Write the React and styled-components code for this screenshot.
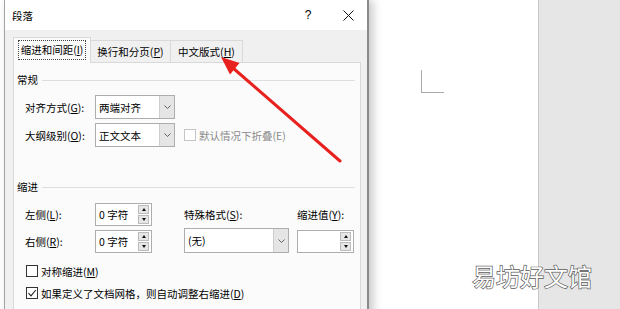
import React from 'react';
import styled, { createGlobalStyle } from 'styled-components';

const GlobalStyle = createGlobalStyle`
  html, body {
    margin: 0;
    padding: 0;
    background: #fff;
  }
`;

const Screen = styled.div`
  position: relative;
  width: 620px;
  height: 309px;
  overflow: hidden;
  display: flex;
  background: #fff;
  font-family: "Noto Sans CJK SC", "Noto Sans", sans-serif;
  font-size: 10.5px;
  color: #000;
`;

const DialogSlot = styled.div`
  flex: none;
  padding-left: 4px;
  position: relative;
  z-index: 1;
`;

const Dialog = styled.div`
  width: 365px;
  height: 340px;
  box-sizing: border-box;
  border-left: 1px solid #a3a3a3;
  border-right: 2px solid #8a8a8a;
  background: #f0f0f0;
  box-shadow: 4px 0 9px rgba(0, 0, 0, 0.22);
  display: flex;
  flex-direction: column;
`;

const TitleBar = styled.div`
  height: 30px;
  flex: none;
  background: #fff;
  display: flex;
  align-items: center;
  padding-left: 7px;
  padding-right: 5px;
`;

const Title = styled.span`
  flex: 1;
`;

const TitleButton = styled.div`
  width: 28px;
  height: 30px;
  margin-left: ${p => p.$gap || 0}px;
  display: flex;
  align-items: center;
  justify-content: center;
  font-family: "Liberation Sans", sans-serif;
  font-size: 12px;
`;

const Body = styled.div`
  flex: 1;
  display: flex;
  flex-direction: column;
  padding: 7px 6px 0 8px;
`;

const TabStrip = styled.div`
  height: 25px;
  display: flex;
  align-items: flex-end;
  position: relative;
  z-index: 1;
`;

const Tab = styled.div`
  width: ${p => p.$w}px;
  height: ${p => (p.$active ? 26 : 22)}px;
  margin-bottom: ${p => (p.$active ? -1 : 0)}px;
  margin-left: ${p => (p.$first ? 0 : -1)}px;
  box-sizing: border-box;
  border: 1px solid #d9d9d9;
  border-bottom: none;
  background: ${p => (p.$active ? '#fbfbfb' : '#f0f0f0')};
  display: flex;
  align-items: center;
  justify-content: center;
  padding-bottom: ${p => (p.$active ? 1 : 0)}px;
  white-space: nowrap;
`;

const TabFocus = styled.span`
  border: 1px dotted #444;
  padding: 1px 2px;
  line-height: 16px;
`;

const Panel = styled.div`
  flex: 1;
  background: #fbfbfb;
  border: 1px solid #d9d9d9;
  padding: 9px 5px 0 3px;
`;

const SectionHeader = styled.div`
  display: flex;
  align-items: center;
  line-height: 16px;
  margin-top: ${p => p.$top || 0}px;

  &::after {
    content: '';
    flex: 1;
    height: 1px;
    margin-left: 4px;
    background: #dedede;
  }
`;

const FormRow = styled.div`
  display: flex;
  align-items: center;
  padding-left: 8px;
  margin-top: ${p => p.$top || 0}px;
`;

const LabelCell = styled.span`
  width: 70px;
  flex: none;
  white-space: nowrap;
`;

const SelectBox = styled.div`
  width: ${p => p.$w}px;
  height: ${p => p.$h || 24}px;
  box-sizing: border-box;
  border: 1px solid #adadad;
  background: #fff;
  display: flex;
  align-self: ${p => (p.$end ? 'end' : 'auto')};
`;

const SelectValue = styled.span`
  flex: 1;
  padding-left: 3px;
  display: flex;
  align-items: center;
`;

const DropButton = styled.span`
  width: 14px;
  flex: none;
  background: #e5e5e5;
  border-left: 1px solid #cdcdcd;
  display: flex;
  align-items: center;
  justify-content: center;
`;

const CheckOption = styled.div`
  display: flex;
  align-items: center;
  gap: 3px;
  margin-left: ${p => p.$left || 0}px;
  margin-top: ${p => p.$top || 0}px;
  padding-left: ${p => p.$pad || 0}px;
  height: 12px;
  color: ${p => (p.$disabled ? '#8a8a8a' : '#000')};
  white-space: nowrap;
`;

const CheckBox = styled.span`
  width: 12px;
  height: 12px;
  flex: none;
  box-sizing: border-box;
  border: 1px solid ${p => (p.$disabled ? '#c4c4c4' : '#333')};
  background: #fff;
  display: flex;
  align-items: center;
  justify-content: center;
`;

const IndentGrid = styled.div`
  display: grid;
  grid-template-columns: 70px 89px 113px 57px;
  grid-template-rows: 23px 23px;
  row-gap: 4px;
  align-items: center;
  padding-left: 8px;
  margin-top: 8px;
`;

const SpinBox = styled.div`
  width: 57px;
  height: 23px;
  box-sizing: border-box;
  border: 1px solid #adadad;
  background: #fff;
  display: flex;
  align-self: end;
`;

const SpinValue = styled.span`
  flex: 1;
  padding-left: 3px;
  display: flex;
  align-items: center;
  white-space: nowrap;
`;

const SpinButtons = styled.span`
  width: 11px;
  flex: none;
  margin: 1px 2px 1px 0;
  display: flex;
  flex-direction: column;
  gap: 1px;
`;

const SpinArrow = styled.span`
  flex: 1;
  background: #e6e6e6;
  border: 1px solid #bcbcbc;
  display: flex;
  align-items: center;
  justify-content: center;

  &::before {
    content: '';
    border-left: 2.5px solid transparent;
    border-right: 2.5px solid transparent;
    ${p => (p.$down ? 'border-top: 3px solid #111;' : 'border-bottom: 3px solid #111;')}
  }
`;

const DocPage = styled.div`
  flex: 1;
  padding: 70px 0 0 52px;
`;

const CornerMark = styled.div`
  width: 22px;
  height: 22px;
  border-left: 1px solid #aaa;
  border-bottom: 1px solid #aaa;
`;

const Sidebar = styled.div`
  width: 82px;
  flex: none;
  box-sizing: border-box;
  border-left: 1px solid #c8c8c8;
  background: #e6e6e6;
`;

const ArrowLayer = styled.svg`
  position: absolute;
  left: 0;
  top: 0;
  z-index: 5;
  pointer-events: none;
`;

const Watermark = styled.div`
  position: absolute;
  right: 28px;
  top: 262px;
  z-index: 6;
  font-family: "Noto Sans CJK SC", sans-serif;
  font-size: 24px;
  line-height: 28px;
  color: #fff;
  -webkit-text-stroke: 1.4px #5c5c5c;
  paint-order: stroke fill;
`;

const Chevron = () => (
  <svg width="7" height="4" viewBox="0 0 7 4">
    <path d="M0.5 0.5 L3.5 3.5 L6.5 0.5" fill="none" stroke="#555" strokeWidth="0.9" />
  </svg>
);

const Tick = () => (
  <svg width="10" height="10" viewBox="0 0 10 10">
    <path d="M1.5 5.2 L4 7.8 L8.8 2" fill="none" stroke="#222" strokeWidth="1.1" />
  </svg>
);

const Select = ({ w, h, end, children }) => (
  <SelectBox $w={w} $h={h} $end={end}>
    <SelectValue>{children}</SelectValue>
    <DropButton><Chevron /></DropButton>
  </SelectBox>
);

const Spin = ({ children }) => (
  <SpinBox>
    <SpinValue>{children}</SpinValue>
    <SpinButtons>
      <SpinArrow />
      <SpinArrow $down />
    </SpinButtons>
  </SpinBox>
);

export default function App() {
  return (
    <Screen>
      <GlobalStyle />
      <DialogSlot>
        <Dialog>
          <TitleBar>
            <Title>段落</Title>
            <TitleButton>?</TitleButton>
            <TitleButton $gap={12}>
              <svg width="11" height="11" viewBox="0 0 11 11">
                <path d="M0.5 0.5 L10.5 10.5 M10.5 0.5 L0.5 10.5" stroke="#111" strokeWidth="1" />
              </svg>
            </TitleButton>
          </TitleBar>
          <Body>
            <TabStrip>
              <Tab $w={78} $active $first>
                <TabFocus>缩进和间距(<u>I</u>)</TabFocus>
              </Tab>
              <Tab $w={81}><span>换行和分页(<u>P</u>)</span></Tab>
              <Tab $w={73}><span>中文版式(<u>H</u>)</span></Tab>
            </TabStrip>
            <Panel>
              <SectionHeader>常规</SectionHeader>
              <FormRow $top={7}>
                <LabelCell>对齐方式(<u>G</u>):</LabelCell>
                <Select w={80}>两端对齐</Select>
              </FormRow>
              <FormRow $top={4}>
                <LabelCell>大纲级别(<u>O</u>):</LabelCell>
                <Select w={80}>正文文本</Select>
                <CheckOption $left={9} $disabled>
                  <CheckBox $disabled />
                  <span>默认情况下折叠(E)</span>
                </CheckOption>
              </FormRow>

              <SectionHeader $top={32}>缩进</SectionHeader>
              <IndentGrid>
                <LabelCell>左侧(<u>L</u>):</LabelCell>
                <Spin>0 字符</Spin>
                <span>特殊格式(<u>S</u>):</span>
                <span>缩进值(<u>Y</u>):</span>
                <LabelCell>右侧(<u>R</u>):</LabelCell>
                <Spin>0 字符</Spin>
                <Select w={105} h={25} end>(无)</Select>
                <Spin />
              </IndentGrid>

              <CheckOption $top={12} $pad={9}>
                <CheckBox />
                <span>对称缩进(<u>M</u>)</span>
              </CheckOption>
              <CheckOption $top={10} $pad={9}>
                <CheckBox><Tick /></CheckBox>
                <span>如果定义了文档网格，则自动调整右缩进(<u>D</u>)</span>
              </CheckOption>
            </Panel>
          </Body>
        </Dialog>
      </DialogSlot>
      <DocPage>
        <CornerMark />
      </DocPage>
      <Sidebar />

      <ArrowLayer width="620" height="309" viewBox="0 0 620 309">
        <line x1="340" y1="161" x2="233" y2="68" stroke="#e8201e" strokeWidth="3" strokeLinecap="round" />
        <polygon points="221,57 239.5,63 230,74.5" fill="#e8201e" />
      </ArrowLayer>
      <Watermark>易坊好文馆</Watermark>
    </Screen>
  );
}
